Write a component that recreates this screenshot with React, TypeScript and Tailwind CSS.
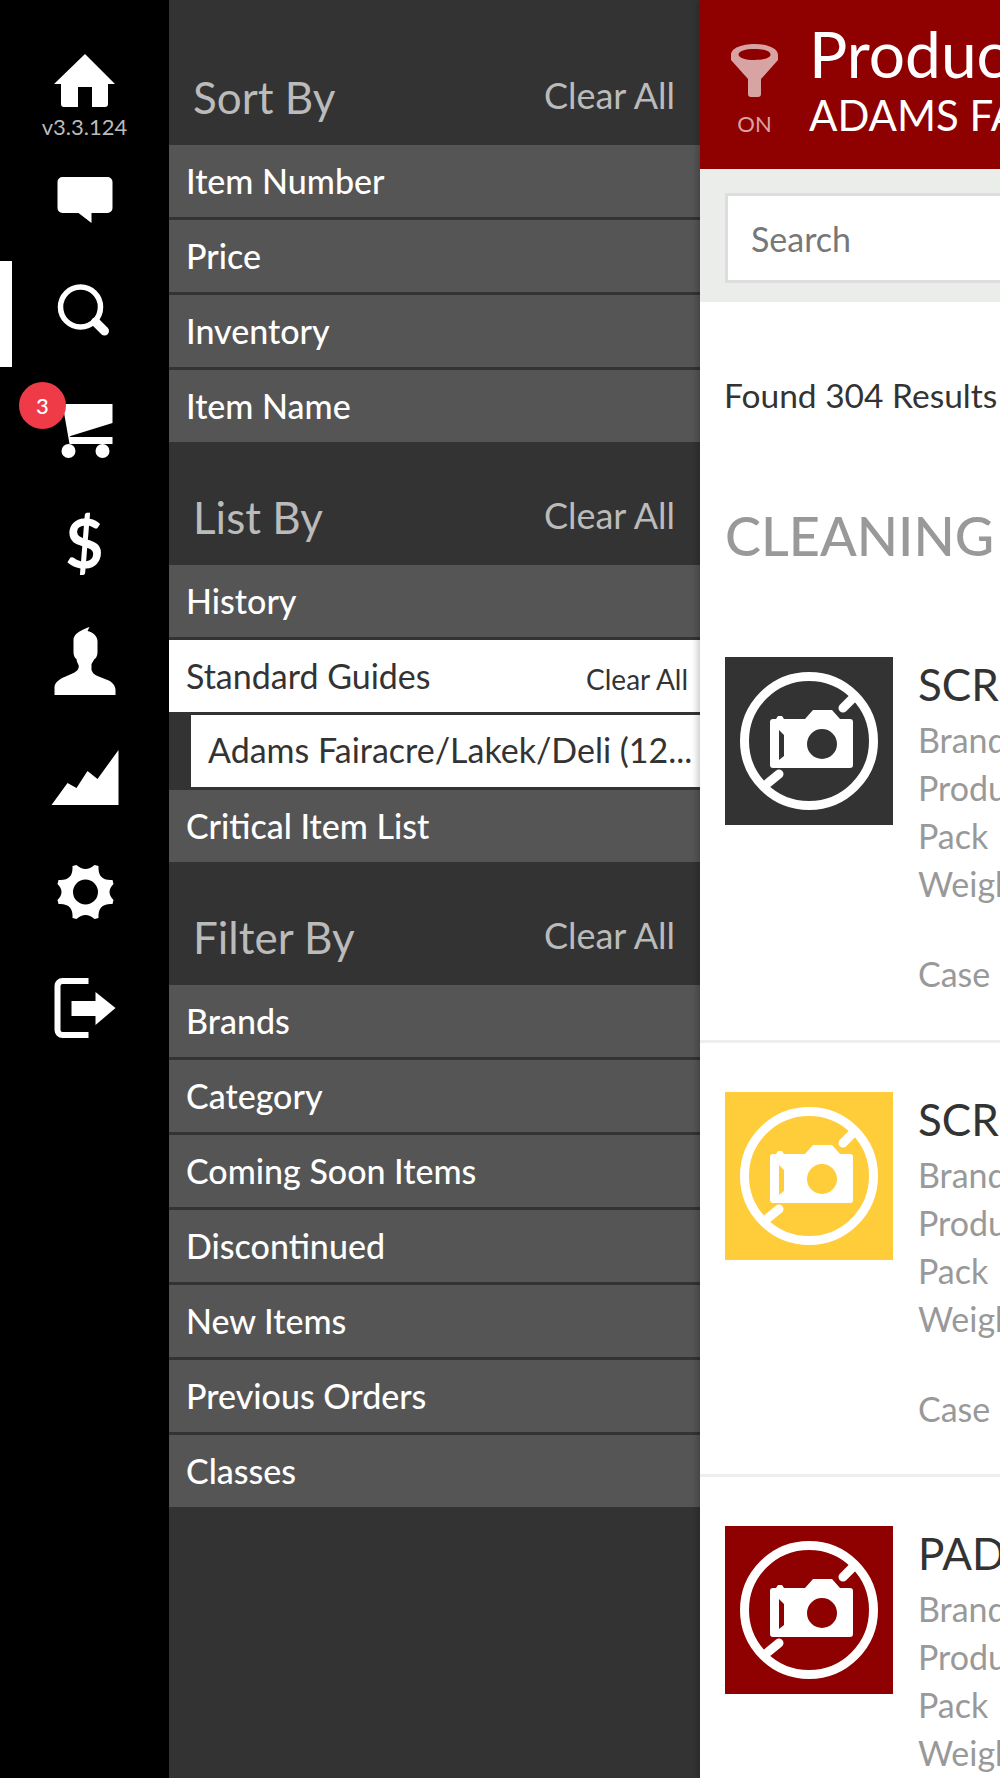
import type { ReactNode } from 'react';

const lato = 'font-[Lato,"Liberation_Sans",sans-serif]';

const NavIcon = ({ y, children }: { y: number; children: ReactNode }) => (
  <svg viewBox={`49.5 ${y} 70 70`} className="h-[70px] w-[70px] fill-white">
    {children}
  </svg>
);

const navItems = [
  {
    y: 163,
    icon: <path d="M62 177h45a5 5 0 0 1 5 5v26a5 5 0 0 1-5 5H91v10l-13-10H62a5 5 0 0 1-5-5v-26a5 5 0 0 1 5-5z" />,
  },
  {
    y: 279,
    active: true,
    icon: (
      <>
        <circle cx="80" cy="307" r="20" fill="none" stroke="#fff" strokeWidth="5.500" />
        <path d="M95 322l9 9" stroke="#fff" strokeWidth="9" strokeLinecap="round" />
      </>
    ),
  },
  {
    y: 395,
    badge: 3,
    icon: (
      <>
        <path d="M62 405h50v19l-42 13-1 1h43v7H69z" />
        <circle cx="68" cy="452" r="7" />
        <circle cx="102" cy="452" r="7" />
      </>
    ),
  },
  {
    y: 510,
    text: '$',
  },
  {
    y: 626,
    icon: (
      <path d="M54 695v-8c0-4 5-8 10-10l9-4c4-2 6-5 5-8-1-2-2-4-2-6-2-1-3-4-3-7v-12c0-4 3-7 7-9 3-2 6-3 9-4l-2 4c5 1 10 5 10 10v11c0 3-1 6-3 7l-3 5v6c1 3 3 5 6 6l10 4c5 2 8 6 8 10v5z" />
    ),
  },
  {
    y: 741,
    icon: <path d="M51 804l16-22 9 5 11-17 10 8 21-29v55z" />,
  },
  {
    y: 857,
    icon: (
      <path
        fillRule="evenodd"
        d="M76 865Q85 873 94 865l4 1Q97 881 112 880l1 4Q105 892 113 900l-1 4Q97 903 98 918l-4 1Q85 911 76 919l-4-1Q73 903 58 904l-1-4Q65 892 57 884l1-4Q73 881 72 866zM85 879.500a12.500 12.500 0 1 0 0 25 12.500 12.500 0 1 0 0-25z"
      />
    ),
  },
  {
    y: 973,
    icon: (
      <>
        <path d="M88 981H62a5 5 0 0 0-5 5v44a5 5 0 0 0 5 5h26" fill="none" stroke="#fff" strokeWidth="6" />
        <path d="M71 1001h24v-9l20 16-20 17v-9H71z" />
      </>
    ),
  },
];

const sections = [
  { title: 'Sort By', rows: ['Item Number', 'Price', 'Inventory', 'Item Name'] },
  { title: 'List By', rows: ['History', 'Standard Guides', 'Critical Item List'] },
  {
    title: 'Filter By',
    rows: ['Brands', 'Category', 'Coming Soon Items', 'Discontinued', 'New Items', 'Previous Orders', 'Classes'],
  },
];

const products = [
  { name: 'SCRUB PADS', bg: 'bg-[#333333]' },
  { name: 'SCRUBBER', bg: 'bg-[#ffcc3a]' },
  { name: 'PADS', bg: 'bg-[#8f0000]' },
];

const NoPhoto = () => (
  <svg viewBox="0 0 168 168" className="h-full w-full">
    <circle cx="84" cy="84" r="64.5" fill="none" stroke="#fff" strokeWidth="9" />
    <path d="M128 41l-10 10M54 117l-11 9" stroke="#fff" strokeWidth="9" strokeLinecap="round" />
    <path
      fill="#fff"
      fillRule="evenodd"
      d="M48 62h3l2-3h4l2 3h21l8-9h19l8 9h10a3 3 0 0 1 3 3v43a3 3 0 0 1-3 3H48a3 3 0 0 1-3-3V65a3 3 0 0 1 3-3zM97 72a15 15 0 1 0 0 30 15 15 0 1 0 0-30zM54 73v30l5-4V78z"
    />
  </svg>
);

const SideRow = ({ label }: { label: string }) => (
  <div className="flex h-[75px] items-center border-b-[3px] border-[#333333] bg-[#555555] pb-[2px] pl-[17px] text-[34px] font-medium text-white last:h-[72px] last:border-b-0">
    {label}
  </div>
);

const App = () => {
  return (
    <div className={`flex h-[1778px] w-[1000px] overflow-hidden bg-white ${lato}`}>
      {/* Icon rail */}
      <nav className="flex w-[169px] shrink-0 flex-col bg-black pt-[26px]">
        <div className="flex h-[114px] flex-col items-center">
          <svg viewBox="54 54 62 54" className="mt-[28px] h-[54px] w-[62px] fill-white">
            <path d="M85 54l30 30h-7v20a3 3 0 0 1-3 3H92V87H78v20H64a3 3 0 0 1-3-3V84h-7z" />
          </svg>
          <span className="mt-[7px] text-[22px] leading-6 text-[#bbbbbb]">v3.3.124</span>
        </div>
        {navItems.map((item) => (
          <div key={item.y} className="relative flex h-[115.75px] items-center justify-center">
            {item.active && <div className="absolute top-[5px] left-0 h-[106px] w-[12px] bg-white" />}
            {item.text ? (
              <span className="pb-[4px] text-[66px] leading-none font-bold text-white">{item.text}</span>
            ) : (
              <NavIcon y={item.y}>{item.icon}</NavIcon>
            )}
            {item.badge && (
              <div className="absolute top-[10px] left-[19px] flex h-[47px] w-[47px] items-center justify-center rounded-full bg-[#ef3b47] text-[22px] font-medium text-white">
                {item.badge}
              </div>
            )}
          </div>
        ))}
      </nav>

      {/* Filter panel */}
      <aside className="w-[531px] shrink-0 bg-[#333333]">
        {sections.map((section, i) => (
          <section key={section.title}>
            <div className={`flex items-end justify-between pr-[25px] pl-[24px] pb-[22px] ${i === 0 ? 'h-[145px]' : 'h-[123px]'}`}>
              <h2 className="text-[44px] leading-[52px] text-[#bbbbbb]">{section.title}</h2>
              <button className="pb-[7px] text-[36px] leading-[42px] text-[#bbbbbb]">Clear All</button>
            </div>
            {section.rows.map((row) =>
              row === 'Standard Guides' ? (
                <div key={row}>
                  <div className="flex h-[75px] items-center justify-between border-b-[3px] border-[#333333] bg-white pr-[12px] pb-[2px] pl-[17px] text-[34px] text-[#333333]">
                    {row}
                    <span className="pt-[8px] text-[28px]">Clear All</span>
                  </div>
                  <div className="h-[75px] border-b-[3px] border-[#333333] pl-[22px]">
                    <div className="flex h-full items-center bg-white pb-[3px] pl-[17px] text-[34px] text-[#333333]">
                      Adams Fairacre/Lakek/Deli (12...
                    </div>
                  </div>
                </div>
              ) : (
                <SideRow key={row} label={row} />
              ),
            )}
          </section>
        ))}
      </aside>

      {/* Main column, runs off the right edge */}
      <main className="relative z-10 w-[800px] shrink-0 shadow-[-3px_0_6px_rgba(0,0,0,0.2)]">
        <header className="flex h-[169px] bg-[#8f0000] text-white">
          <div className="flex w-[109px] flex-col items-center pt-[44px]">
            <svg viewBox="731 44 47 53" className="h-[53px] w-[47px] fill-[#d8a3a3]">
              <path
                fillRule="evenodd"
                d="M731 55c0-7 11-11 23.500-11S778 48 778 55v5l-17 19v15a3 3 0 0 1-3 3h-7a3 3 0 0 1-3-3V79l-17-19zM754.500 49c-9 0-16 2-16 5.500s7 5.500 16 5.500 16-2 16-5.500-7-5.500-16-5.500z"
              />
            </svg>
            <span className="mt-[13px] text-[22px] leading-7 text-[#d8a3a3]">ON</span>
          </div>
          <div className="pt-[18px] whitespace-nowrap">
            <h1 className="text-[64px] leading-[72px]">Products</h1>
            <p className="mt-[2px] text-[42px] leading-[46px] uppercase">Adams Fairacre</p>
          </div>
        </header>

        <div className="bg-[#ebedeb] pt-[24px] pb-[19px] pl-[25px]">
          <div className="flex h-[90px] w-[700px] items-center border-[3px] border-[#dddddd] bg-white pl-[23px] text-[34px] text-[#777777]">
            Search
          </div>
        </div>

        <p className="mt-[72px] pl-[24px] text-[33.5px] leading-[42px] text-[#333333]">Found 304 Results</p>
        <h2 className="mt-[85px] pl-[25px] text-[54px] leading-[70px] font-medium text-[#999999]">CLEANING SUPPLIES</h2>

        <div className="mt-[86px]">
          {products.map((p) => (
            <article key={p.name} className="mb-[49px] flex h-[385.5px] border-b-[3px] border-[#eeeeee] pl-[25px] last:border-b-0">
              <div className={`h-[168px] w-[168px] shrink-0 ${p.bg}`}>
                <NoPhoto />
              </div>
              <div className="pl-[25px] whitespace-nowrap">
                <h3 className="text-[44px] leading-[55px] text-[#333333]">{p.name}</h3>
                <div className="mt-[4px] text-[34px] leading-[48px] text-[#999999]">
                  <p>Brand</p>
                  <p>Product</p>
                  <p>Pack</p>
                  <p>Weight</p>
                  <p className="mt-[42px]">Case</p>
                </div>
              </div>
            </article>
          ))}
        </div>
      </main>
    </div>
  );
};

export default App;
